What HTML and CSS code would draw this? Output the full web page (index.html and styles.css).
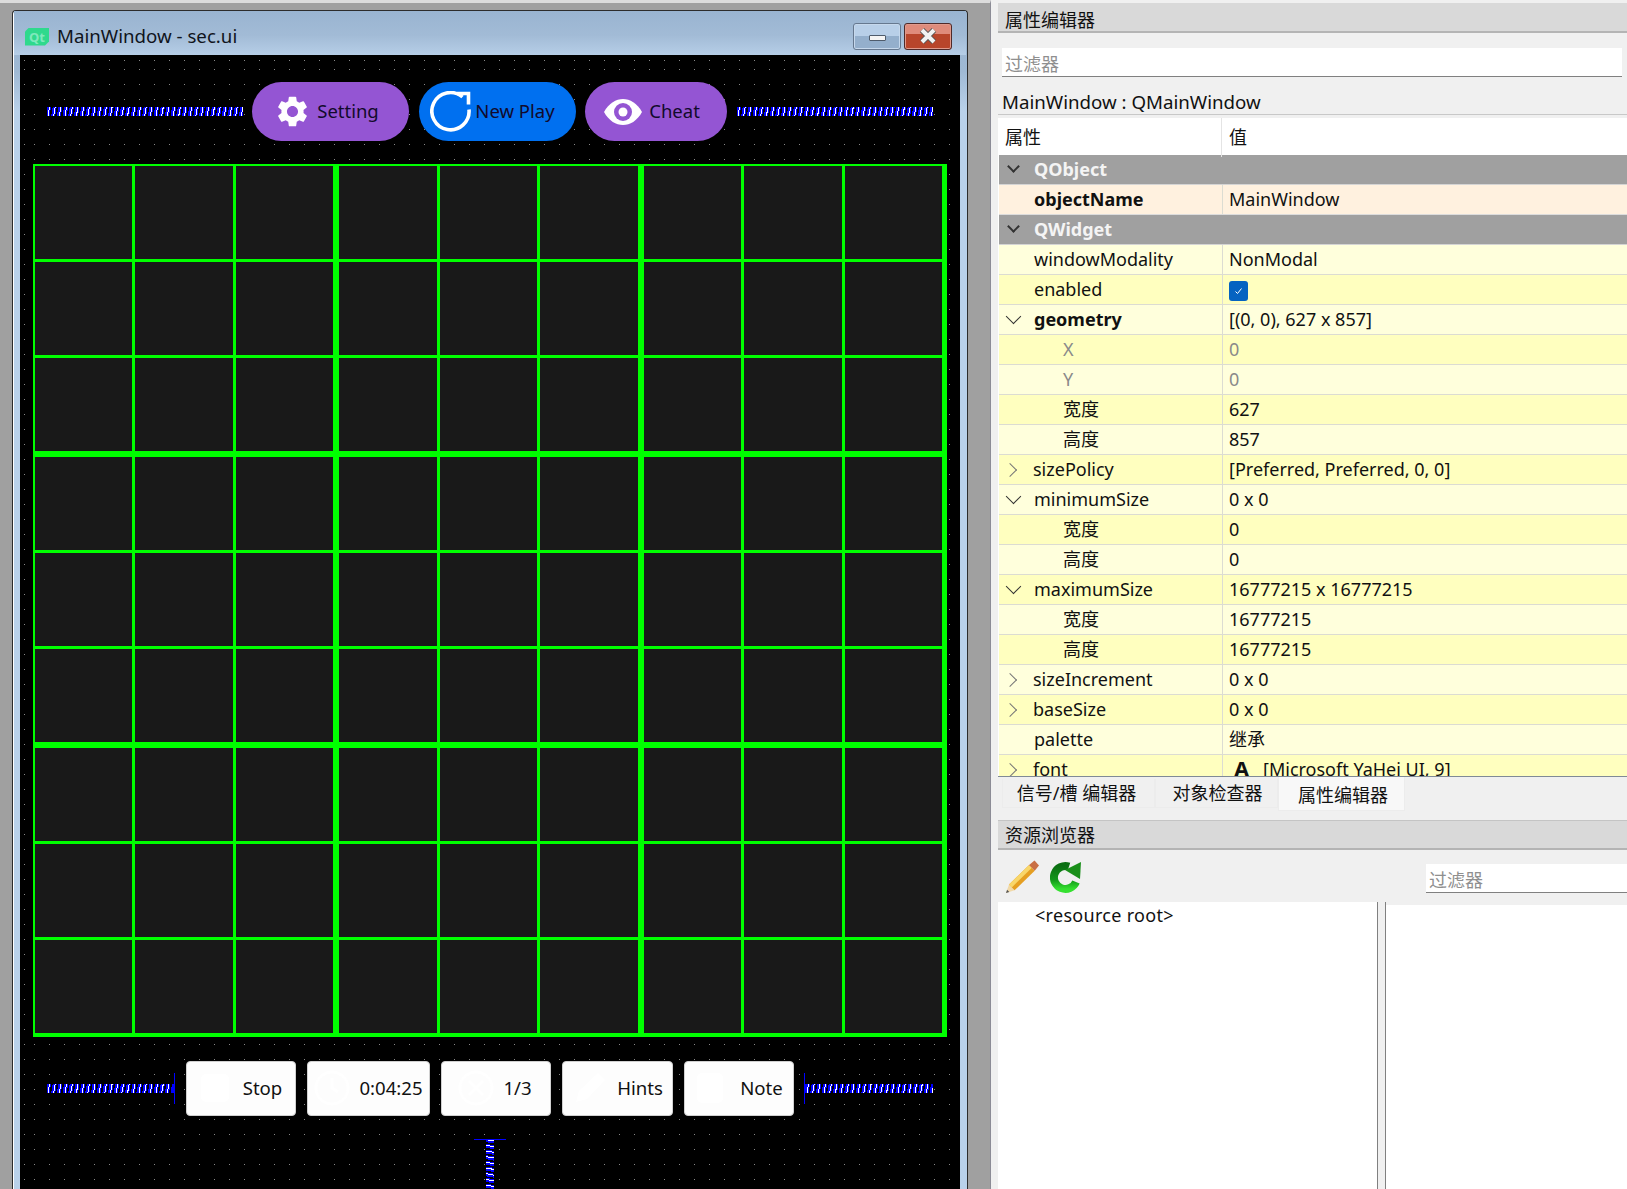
FILE: index.html
```html
<!DOCTYPE html>
<html lang="en">
<head>
    <meta charset="UTF-8">
    <title>MainWindow - sec.ui</title>
    <link rel="stylesheet" href="styles.css">
</head>
<body>

<div class="canvas">
    <div class="window">
        <div class="titlebar">
            <span class="qt-logo">Qt</span>
            <span class="title-text">MainWindow - sec.ui</span>
            <span class="win-btn win-min"><span class="dash"></span></span>
            <span class="win-btn win-close">
                <svg width="20" height="18" viewBox="0 0 20 18"><path d="M4 3l12 12M16 3L4 15" stroke="#555" stroke-width="6"/><path d="M4 3l12 12M16 3L4 15" stroke="#f2f2f2" stroke-width="4"/></svg>
            </span>
        </div>

        <div class="form">
            <div class="toolbar">
                <div class="spring"></div>
                <div class="pill pill-purple pill-setting">
                    <svg class="pill-gear" viewBox="0 0 24 24"><path fill="#fff" d="M19.14 12.94c.04-.3.06-.61.06-.94 0-.32-.02-.64-.07-.94l2.03-1.58a.49.49 0 0 0 .12-.61l-1.92-3.32a.488.488 0 0 0-.59-.22l-2.39.96c-.5-.38-1.03-.7-1.62-.94l-.36-2.54a.484.484 0 0 0-.48-.41h-3.84c-.24 0-.43.17-.47.41l-.36 2.54c-.59.24-1.13.57-1.62.94l-2.39-.96c-.22-.08-.47 0-.59.22L2.74 8.87c-.12.21-.08.47.12.61l2.03 1.58c-.05.3-.09.63-.09.94s.02.64.07.94l-2.03 1.58a.49.49 0 0 0-.12.61l1.92 3.32c.12.22.37.29.59.22l2.39-.96c.5.38 1.03.7 1.62.94l.36 2.54c.05.24.24.41.48.41h3.84c.24 0 .44-.17.47-.41l.36-2.54c.59-.24 1.13-.56 1.62-.94l2.39.96c.22.08.47 0 .59-.22l1.92-3.32c.12-.22.07-.47-.12-.61l-2.01-1.58zM12 15.6c-1.98 0-3.6-1.62-3.6-3.6s1.62-3.6 3.6-3.6 3.6 1.62 3.6 3.6-1.62 3.6-3.6 3.6z"/></svg>
                    <span>Setting</span>
                </div>
                <div class="pill pill-blue">
                    <svg class="pill-reload" viewBox="0 0 42 42"><path fill="none" stroke="#fff" stroke-width="3.6" d="M39 18.5A18.6 18.6 0 1 1 32.5 6"/><path fill="none" stroke="#fff" stroke-width="3.6" d="M27 2.5H38.5V13.5"/></svg>
                    <span>New Play</span>
                </div>
                <div class="pill pill-purple pill-cheat">
                    <svg class="pill-eye" viewBox="0 0 38 26"><path fill="#fff" d="M0 13C5 4 12 0 19 0s14 4 19 13c-5 9-12 13-19 13S5 22 0 13z"/><circle cx="19" cy="13" r="9" fill="#9455d3"/><circle cx="19" cy="13" r="4.5" fill="#fff"/></svg>
                    <span>Cheat</span>
                </div>
                <div class="spring spring-last"></div>
            </div>

            <div class="board">
                <div class="block"><i></i><i></i><i></i><i></i><i></i><i></i><i></i><i></i><i></i></div>
                <div class="block"><i></i><i></i><i></i><i></i><i></i><i></i><i></i><i></i><i></i></div>
                <div class="block"><i></i><i></i><i></i><i></i><i></i><i></i><i></i><i></i><i></i></div>
                <div class="block"><i></i><i></i><i></i><i></i><i></i><i></i><i></i><i></i><i></i></div>
                <div class="block"><i></i><i></i><i></i><i></i><i></i><i></i><i></i><i></i><i></i></div>
                <div class="block"><i></i><i></i><i></i><i></i><i></i><i></i><i></i><i></i><i></i></div>
                <div class="block"><i></i><i></i><i></i><i></i><i></i><i></i><i></i><i></i><i></i></div>
                <div class="block"><i></i><i></i><i></i><i></i><i></i><i></i><i></i><i></i><i></i></div>
                <div class="block"><i></i><i></i><i></i><i></i><i></i><i></i><i></i><i></i><i></i></div>
            </div>

            <div class="actions">
                <div class="spring spring-end-right"></div>
                <div class="action">
                    <svg class="faint" width="30" height="30" viewBox="0 0 30 30"><rect x="1" y="1" width="28" height="28" rx="5" fill="#fff"/></svg>
                    <span class="label-stop">Stop</span>
                </div>
                <div class="action action-wide">
                    <svg class="faint" width="36" height="36" viewBox="0 0 36 36"><circle cx="18" cy="18" r="16" fill="none" stroke="#fff" stroke-width="3"/><path d="M18 8v10l6 4" fill="none" stroke="#fff" stroke-width="3"/></svg>
                    <span>0:04:25</span>
                </div>
                <div class="action action-count">
                    <svg class="faint" width="36" height="36" viewBox="0 0 36 36"><circle cx="18" cy="18" r="16" fill="none" stroke="#fff" stroke-width="3"/><path d="M11 11l14 14M25 11L11 25" stroke="#fff" stroke-width="3"/></svg>
                    <span>1/3</span>
                </div>
                <div class="action action-hints">
                    <svg class="faint" width="36" height="36" viewBox="0 0 36 36"><path d="M4 32l3-11L26 3l7 7-18 19z" fill="#fff"/></svg>
                    <span>Hints</span>
                </div>
                <div class="action">
                    <svg class="faint" width="30" height="32" viewBox="0 0 30 32"><rect x="2" y="1" width="26" height="30" rx="5" fill="#fff"/></svg>
                    <span class="label-note">Note</span>
                </div>
                <div class="spring spring-end-left"></div>
            </div>

            <div class="spring-v-wrap"><div class="spring-v"></div></div>
        </div>
    </div>
</div>

<div class="panel">
    <div class="dock-title">属性编辑器</div>
    <div class="filter-row"><div class="filter">过滤器</div></div>
    <div class="object-label">MainWindow : QMainWindow</div>

    <div class="props">
        <div class="prop-head"><div>属性</div><div>值</div></div>

        <div class="row group open"><div class="name">QObject</div></div>
        <div class="row orange"><div class="name bold">objectName</div><div class="val">MainWindow</div></div>
        <div class="row group open"><div class="name">QWidget</div></div>
        <div class="row"><div class="name">windowModality</div><div class="val">NonModal</div></div>
        <div class="row alt"><div class="name">enabled</div><div class="val"><span class="check"><svg width="10" height="8" viewBox="0 0 10 8"><path d="M1.5 4.5l2 2 4-5" fill="none" stroke="#fff" stroke-width="1"/></svg></span></div></div>
        <div class="row open"><div class="name bold">geometry</div><div class="val">[(0, 0), 627 x 857]</div></div>
        <div class="row alt"><div class="name child muted">X</div><div class="val muted">0</div></div>
        <div class="row"><div class="name child muted">Y</div><div class="val muted">0</div></div>
        <div class="row alt"><div class="name child">宽度</div><div class="val">627</div></div>
        <div class="row"><div class="name child">高度</div><div class="val">857</div></div>
        <div class="row alt closed"><div class="name">sizePolicy</div><div class="val">[Preferred, Preferred, 0, 0]</div></div>
        <div class="row open"><div class="name">minimumSize</div><div class="val">0 x 0</div></div>
        <div class="row alt"><div class="name child">宽度</div><div class="val">0</div></div>
        <div class="row"><div class="name child">高度</div><div class="val">0</div></div>
        <div class="row alt open"><div class="name">maximumSize</div><div class="val">16777215 x 16777215</div></div>
        <div class="row"><div class="name child">宽度</div><div class="val">16777215</div></div>
        <div class="row alt"><div class="name child">高度</div><div class="val">16777215</div></div>
        <div class="row closed"><div class="name">sizeIncrement</div><div class="val">0 x 0</div></div>
        <div class="row alt closed"><div class="name">baseSize</div><div class="val">0 x 0</div></div>
        <div class="row"><div class="name">palette</div><div class="val">继承</div></div>
        <div class="row alt closed"><div class="name">font</div><div class="val"><span class="font-a">A</span>[Microsoft YaHei UI, 9]</div></div>
    </div>

    <div class="tabs">
        <div class="tab tab-first">信号/槽 编辑器</div>
        <div class="tab tab-second">对象检查器</div>
        <div class="tab tab-active">属性编辑器</div>
    </div>

    <div class="dock-title dock-title-res">资源浏览器</div>
    <div class="res-tools">
        <svg class="tool-pencil" width="34" height="34" viewBox="0 0 34 34">
            <path d="M1 33l3-8.5 5.6 5.8z" fill="#f1d9a8"/>
            <path d="M1 33l1.1-3.2 2.2 2.2z" fill="#555"/>
            <path d="M4 24.5L24.1 4.9l5.6 5.8L9.6 30.3z" fill="#e59f22"/>
            <path d="M4 24.5L24.1 4.9l2.8 2.9L6.8 27.4z" fill="#f8d66a"/>
            <path d="M24.1 4.9l5.4-4.4 4.5 5-4.3 5.2z" fill="#c96f45"/>
        </svg>
        <svg class="tool-refresh" width="32" height="32" viewBox="0 0 32 32">
            <defs>
                <linearGradient id="refreshRing" x1="0" y1="0" x2="0" y2="1">
                    <stop offset="0" stop-color="#0b6f12"/>
                    <stop offset="0.6" stop-color="#12961a"/>
                    <stop offset="1" stop-color="#35e030"/>
                </linearGradient>
            </defs>
            <path d="M26 21A11.5 11.5 0 1 1 19 5.5" fill="none" stroke="url(#refreshRing)" stroke-width="8"/>
            <path d="M15 9L31 1l-1 17z" fill="#1a8f1a"/>
        </svg>
        <div class="filter filter-res">过滤器</div>
    </div>
    <div class="res-body">
        <div class="res-tree">&lt;resource root&gt;</div>
        <div class="res-split"></div>
        <div class="res-list"></div>
    </div>
</div>

</body>
</html>
```

FILE: styles.css
```css
* {
    box-sizing: border-box;
}

html, body {
    margin: 0;
    height: 100%;
    overflow: hidden;
}

body {
    display: flex;
    font-family: "Noto Sans", "Noto Sans CJK SC", sans-serif;
    font-size: 18px;
    color: #111;
    background-color: #f0f0f0;
}

/* designer canvas */
.canvas {
    width: 991px;
    height: 1189px;
    padding: 10px 0 0 12px;
    background-color: #a0a0a0;
    border-top: 3px solid #dcdcdc;
    border-right: 1px solid #8c8c96;
    background-clip: padding-box;
}

.window {
    width: 956px;
    height: 1180px;
    margin-top: -3px;
    padding: 0 7px;
    border: 1px solid #2c2c2c;
    border-bottom: none;
    border-radius: 4px 4px 0 0;
    background: linear-gradient(#99b4d1, #9fb9d4 60px, #b9d1ea 100px);
    box-shadow: inset 1px 1px 0 #fff;
}

.titlebar {
    display: flex;
    align-items: center;
    height: 44px;
    margin: 0 -6px;
    padding: 4px 14px 0 5px;
    background: linear-gradient(#99b4d1, #a2bbd6 55%, #b6cee7);
}

.qt-logo {
    width: 24px;
    height: 18px;
    margin: 3px 8px 0 6px;
    font-size: 13px;
    font-weight: bold;
    line-height: 18px;
    text-align: center;
    color: #7fe9bd;
    background-color: #2fd98d;
    clip-path: polygon(4px 0, 100% 0, 100% calc(100% - 4px), calc(100% - 4px) 100%, 0 100%, 0 4px);
}

.title-text {
    flex: 1;
    font-size: 18.7px;
    color: #10141c;
}

.win-btn {
    display: flex;
    align-items: center;
    justify-content: center;
    width: 48px;
    height: 27px;
    margin: 2px 0 0 3px;
    border-radius: 3px;
}

.win-min {
    border: 1px solid #66788f;
    background: linear-gradient(#b8cfe8 50%, #94afcc 50%);
    box-shadow: inset 0 0 0 1px #c6d8ec;
}

.dash {
    width: 17px;
    height: 6px;
    margin-top: 3px;
    border: 1px solid #4f5c6c;
    border-radius: 1px;
    background-color: #f4f4f4;
}

.win-close {
    border: 1px solid #4f2a2a;
    background: linear-gradient(#df8b7b 40%, #b8452b 40%);
    box-shadow: inset 0 0 0 1px #e09a8c;
}

/* central widget with the 15px designer dots */
.form {
    height: 1134px;
    overflow: hidden;
    background-color: #000;
    background-image:
        repeating-linear-gradient(to bottom, transparent 0 1px, #000 1px 15px),
        repeating-linear-gradient(to right, #888 0 1px, #000 1px 15px);
    background-position: 14px 14px;
}

.toolbar {
    display: flex;
    align-items: center;
    gap: 9px;
    margin-top: 27px;
    padding: 0 27px;
}

.toolbar .spring {
    flex: none;
    width: 196px;
}

.toolbar .spring-last {
    margin-left: 1px;
}

.spring {
    flex: 1;
    height: 9px;
    background-image: repeating-linear-gradient(100deg, #0000ff 0 2px, #fff 2px 3px, #0000ff 3px 4px, #000 4px 5.6px);
}

.spring-end-right {
    flex: none;
    width: 128px;
    position: relative;
    border-right: 2px solid #0000ff;
}

.spring-end-left {
    margin-left: -1px;
    position: relative;
    border-left: 2px solid #0000ff;
}

/* the blue end caps stick out of the coil */
.spring-end-right::after,
.spring-end-left::after {
    content: "";
    position: absolute;
    top: -11px;
    width: 1px;
    height: 31px;
    background-color: #0000ff;
}

.spring-end-right::after {
    right: -2px;
}

.spring-end-left::after {
    left: -2px;
}

.pill {
    display: flex;
    align-items: center;
    justify-content: center;
    flex: none;
    width: 157px;
    height: 59px;
    border-radius: 30px;
    font-size: 18.5px;
    color: #120a2c;
}

.pill span {
    padding-bottom: 2px;
}

.pill-purple {
    background-color: #9455d3;
}

.pill-blue {
    gap: 3px;
    margin-left: 1px;
    padding-left: 1px;
    padding-right: 11px;
    background-color: #0070f0;
}

.pill-setting {
    gap: 9px;
    padding-right: 5px;
}

.pill-cheat {
    gap: 7px;
    width: 142px;
    padding-right: 8px;
}

.pill-gear {
    width: 37px;
    height: 37px;
    margin: 0 -3px;
}

.pill-reload {
    flex: none;
    width: 42px;
    height: 42px;
}

.pill-eye {
    width: 38px;
    height: 26px;
}

.board {
    display: grid;
    grid-template-columns: repeat(3, 1fr);
    grid-template-rows: repeat(3, 1fr);
    gap: 6px;
    width: 914px;
    height: 873px;
    margin: 23px 0 0 13px;
    padding: 2px 5px 4px 2px;
    background-color: #00ff00;
}

.block {
    display: grid;
    grid-template-columns: repeat(3, 1fr);
    grid-template-rows: repeat(3, 1fr);
    gap: 3px;
}

.block i {
    background-color: #191919;
}

.actions {
    display: flex;
    align-items: center;
    gap: 11px;
    margin-top: 24px;
    padding: 0 27px;
}

.action {
    display: flex;
    align-items: center;
    justify-content: center;
    gap: 9px;
    flex: none;
    width: 110px;
    height: 55px;
    padding-bottom: 2px;
    border: 1px solid #d0d0d0;
    border-radius: 4px;
    font-size: 18.6px;
    background-color: #fdfdfd;
}

.action-wide {
    width: 123px;
}

.action-count {
    padding-right: 2px;
}

.action-hints {
    width: 111px;
}

.label-stop {
    margin-left: 4px;
}

.label-note {
    margin-left: 6px;
}

.spring-v-wrap {
    display: flex;
    justify-content: center;
    margin-top: 23px;
}

.spring-v {
    width: 32px;
    height: 60px;
    border-top: 1px solid #0000ff;
    background-image: repeating-linear-gradient(10deg, #0000ff 0 2px, #fff 2px 3px, #0000ff 3px 4px, #000 4px 5.6px);
    background-size: 8px 100%;
    background-position: center;
    background-repeat: no-repeat;
}

/* property editor side */
.panel {
    flex: 1;
    min-width: 0;
    padding: 3px 0 0 7px;
}

.dock-title {
    height: 30px;
    padding: 4px 0 0 7px;
    line-height: 26px;
    font-size: 18px;
    background-color: #d9d9d9;
    border-bottom: 2px solid #b4b4b4;
}

.filter-row {
    padding: 15px 5px 0 4px;
}

.filter {
    height: 29px;
    padding-left: 3px;
    line-height: 32px;
    color: #8f8f8f;
    background-color: #fff;
    border-bottom: 1px solid #808080;
}

.object-label {
    height: 29px;
    margin-top: 9px;
    padding: 2px 0 0 4px;
    font-size: 18.7px;
    line-height: 28px;
    border-bottom: 1px solid #c8c8c8;
}

.props {
    height: 659px;
    margin-top: 3px;
    overflow: hidden;
    background-color: #fff;
    border-bottom: 1px solid #808a96;
}

.prop-head {
    display: grid;
    grid-template-columns: 224px 1fr;
    height: 37px;
    line-height: 39px;
}

.prop-head div {
    padding-left: 7px;
}

.prop-head div:first-child {
    border-right: 1px solid #e4e4e4;
}

.row {
    display: grid;
    grid-template-columns: 224px 1fr;
    height: 30px;
    margin-left: 1px;
    line-height: 27px;
    background-color: #ffffdc;
    border-bottom: 1px solid #dcdcd2;
}

.row.alt {
    background-color: #ffffbf;
}

.row.orange {
    background-color: #fff1df;
    border-bottom-color: #dcdcdc;
}

.row.group {
    display: block;
    background-color: #a0a0a0;
    border-bottom-color: #d4d4d4;
    color: #f4f4f4;
    font-weight: bold;
}

.name {
    display: flex;
    align-items: center;
    height: 29px;
    padding-left: 35px;
    border-right: 1px solid #dcdcd2;
}

.group .name {
    border-right: none;
}

.name.child {
    padding-left: 64px;
}

.bold {
    font-weight: bold;
}

.muted {
    color: #8a8a8a;
}

.open .name,
.closed .name {
    padding-left: 9px;
}

.open .name::before,
.closed .name::before {
    content: "";
    flex: none;
    width: 10px;
    height: 10px;
    margin-right: 15px;
    border: solid #333;
    border-width: 0 0 1.5px 1.5px;
    transform: translate(0, -3px) rotate(-45deg);
}

.closed .name::before {
    width: 9px;
    height: 9px;
    margin-left: -3px;
    margin-right: 18px;
    border-color: #777;
    transform: rotate(-135deg);
}

.group .name::before {
    width: 7px;
    height: 7px;
    margin-left: 1px;
    margin-right: 16px;
    border-color: #333;
    border-width: 0 0 2px 2px;
}

.val {
    display: flex;
    align-items: center;
    height: 29px;
    padding-left: 6px;
}

.check {
    display: flex;
    align-items: center;
    justify-content: center;
    width: 19px;
    height: 20px;
    margin-top: 2px;
    border-radius: 3px;
    background-color: #0563c1;
}

.font-a {
    width: 34px;
    margin-top: -3px;
    padding-left: 5px;
    font-size: 22px;
    font-weight: bold;
    line-height: 1;
}

.tabs {
    display: flex;
    align-items: flex-start;
    height: 43px;
    padding-left: 4px;
    background-color: #f0f0f0;
}

.tab {
    height: 29px;
    margin-top: 2px;
    font-size: 18px;
    line-height: 28px;
    text-align: center;
    background-color: #f0f0f0;
    border: 1px solid #ececec;
    border-top: none;
}

.tab-first {
    width: 153px;
    padding-right: 4px;
}

.tab-second {
    width: 123px;
    padding-left: 2px;
}

.tab-active {
    width: 127px;
    height: 34px;
    margin-top: 0;
    padding-left: 3px;
    line-height: 36px;
    background-color: #f8f8f8;
}

.dock-title-res {
    padding-top: 0;
    line-height: 29px;
    border-top: 1px solid #c4c4c4;
}

.res-tools {
    display: flex;
    align-items: center;
    height: 52px;
    padding: 2px 0 0 7px;
}

.tool-refresh {
    margin-left: 11px;
}

.filter-res {
    width: 201px;
    margin: 2px 0 0 auto;
}

.res-body {
    display: flex;
    height: 288px;
}

.res-tree {
    width: 380px;
    padding: 0 0 0 37px;
    line-height: 27px;
    letter-spacing: 0.3px;
    background-color: #fff;
    border-right: 1px solid #808080;
}

.res-split {
    width: 8px;
    border-right: 1px solid #808080;
}

.res-list {
    flex: 1;
    margin-top: 3px;
    background-color: #fff;
}
```
